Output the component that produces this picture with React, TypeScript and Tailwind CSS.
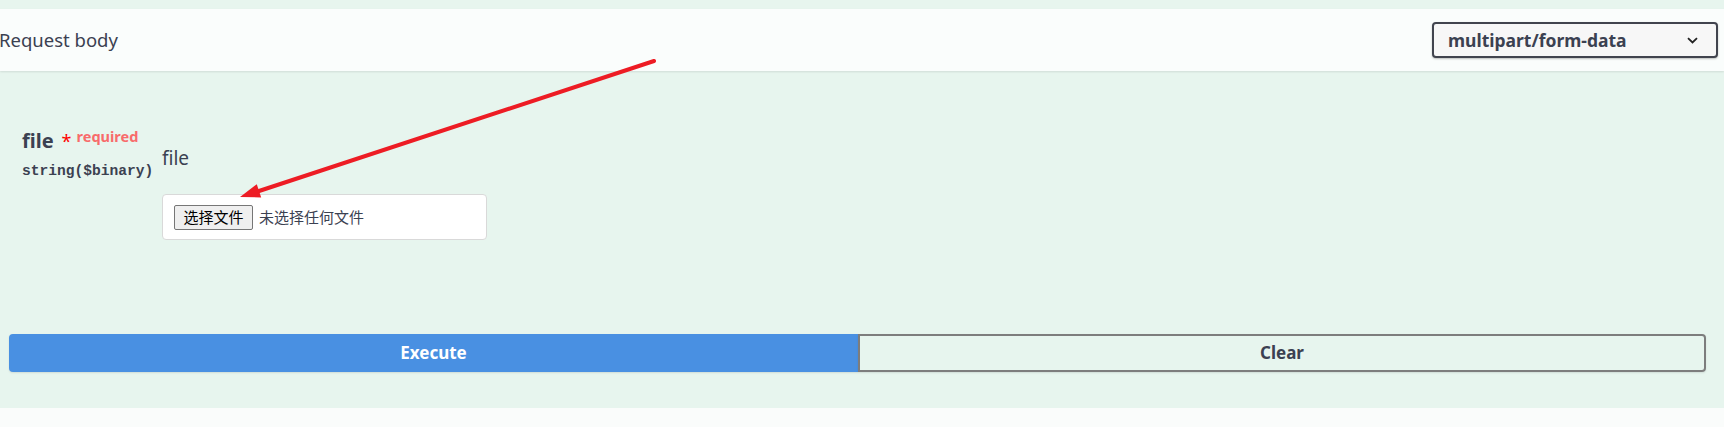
export default function App() {
    return (
        <div
            className="relative w-[1724px] h-[427px] overflow-hidden bg-[#e7f5ee] text-[#3b4151]"
            style={{ fontFamily: '"Noto Sans", "Noto Sans CJK SC", sans-serif' }}
        >
            <div className="h-[9px]" />

            {/* section header */}
            <div className="h-[62px] bg-[#fafdfc] shadow-[0_1px_2px_rgba(0,0,0,0.1)] flex items-center justify-between pr-[6px]">
                <span className="ml-[-1px] text-[18.5px] text-[#3b4151]">Request body</span>
                <div className="w-[286px] h-[36px] border-2 border-[#41444e] rounded-[4px] bg-[#f7f7f7] shadow-[0_1px_2px_rgba(0,0,0,0.25)] flex items-center justify-between pl-[14px] pr-[18px]">
                    <span className="text-[17.5px] font-bold">multipart/form-data</span>
                    <svg width="11" height="7" viewBox="0 0 11 7" className="mt-[1px]">
                        <path d="M1 1.2 L5.5 5.5 L10 1.2" fill="none" stroke="#222" strokeWidth="1.8" />
                    </svg>
                </div>
            </div>

            {/* body */}
            <div className="h-[337px] flex flex-col">
                <div className="flex items-start pl-[22px] pt-[57px]">
                    <div className="w-[140px]">
                        <div className="flex items-start">
                            <span className="text-[20px] font-bold leading-[26px]">file</span>
                            <span className="ml-[8px] mt-[3px] text-[18px] leading-[20px] text-[#ff0000]">*</span>
                            <span className="ml-[5px] mt-[-1px] text-[14.5px] font-bold leading-[18px] text-[#f86b6b]">required</span>
                        </div>
                        <div
                            className="mt-[8px] text-[14.6px] font-bold leading-[18px] text-[#3b4151]"
                            style={{ fontFamily: '"Liberation Mono", monospace' }}
                        >
                            string($binary)
                        </div>
                    </div>
                    <div className="flex flex-col">
                        <div className="mt-[18px] text-[19px] leading-[24px]">file</div>
                        <div className="mt-[24px] w-[325px] h-[46px] bg-white border border-[#d9d9d9] rounded-[4px] flex items-center pl-[11px]">
                            <div className="w-[79px] h-[25px] bg-[#efefef] border border-[#767676] rounded-[2px] flex items-center justify-center text-[15px] text-black">
                                选择文件
                            </div>
                            <span className="ml-[6px] text-[15px] text-[#3b4151]">未选择任何文件</span>
                        </div>
                    </div>
                </div>

                <div className="mt-auto mb-[36px] pl-[9px] flex">
                    <div className="w-[849px] h-[38px] bg-[#4990e2] border-2 border-[#4990e2] rounded-l-[4px] shadow-[0_1px_2px_rgba(0,0,0,0.1)] flex items-center justify-center text-white text-[17px] font-bold">
                        Execute
                    </div>
                    <div className="w-[848px] h-[38px] border-2 border-[#7d7d7d] rounded-r-[4px] shadow-[0_1px_2px_rgba(0,0,0,0.1)] flex items-center justify-center text-[17px] font-bold text-[#3b4151]">
                        Clear
                    </div>
                </div>
            </div>

            <div className="h-[19px] bg-[#fafcfb]" />

            {/* red annotation arrow */}
            <svg className="absolute left-0 top-0" width="1724" height="427">
                <line x1="654" y1="61" x2="256" y2="192" stroke="#ed1c24" strokeWidth="4" strokeLinecap="round" />
                <polygon points="240,197 256.8,184.2 261.2,197.4" fill="#ed1c24" />
            </svg>
        </div>
    );
}
